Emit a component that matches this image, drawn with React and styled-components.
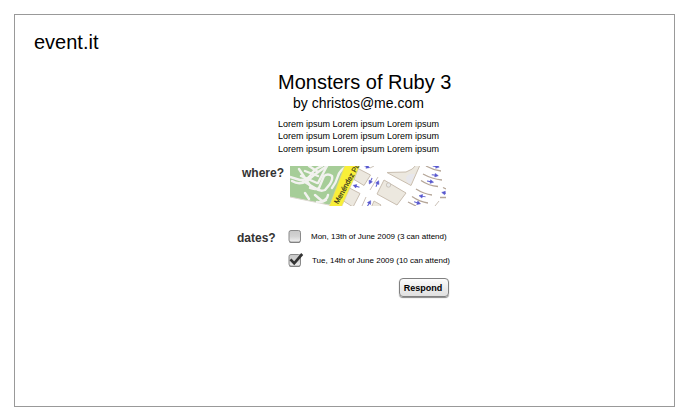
import React from "react";
import styled, { createGlobalStyle } from "styled-components";

const GlobalStyle = createGlobalStyle`
  * { box-sizing: border-box; }
  body { margin: 0; background: #fff; color: #000; font-family: "Liberation Sans", Arial, sans-serif; }
  h1, h2, p { margin: 0; font-weight: 400; }
`;

const Page = styled.main`
  width: 661px;
  height: 393px;
  margin: 14px 0 0 14px;
  border: 1px solid #999;
  padding: 15px 0 0 19px;
  display: flex;
  flex-direction: column;
  align-items: flex-start;
`;

const Brand = styled.h2`
  font-size: 20px;
  line-height: 24px;
`;

const Event = styled.section`
  width: 220px;
  margin: 16px 0 0 203px;
  display: flex;
  flex-direction: column;
`;

const Heading = styled.header`
  margin-left: 41px;
  white-space: nowrap;
`;

const Title = styled.h1`
  font-size: 20px;
  line-height: 24px;
`;

const Host = styled.p`
  font-size: 14px;
  line-height: 18px;
  padding-left: 15px;
`;

const Description = styled.p`
  margin-top: 6px;
  font-size: 9px;
  line-height: 12.4px;
`;

const Field = styled.div`
  display: flex;
  align-items: flex-start;
  margin-top: ${({ $top }) => $top}px;
`;

const Label = styled.div`
  flex: none;
  width: ${({ $width }) => $width}px;
  padding-left: ${({ $indent }) => $indent}px;
  padding-top: ${({ $drop = 0 }) => $drop}px;
  color: #333;
  font-size: 12px;
  font-weight: 700;
  line-height: 14px;
`;

const Map = styled.svg`
  display: block;
  flex: none;
  width: 156px;
  height: 40px;
`;

const Dates = styled.div`
  display: flex;
  flex-direction: column;
  gap: 8px;
`;

const DateOption = styled.label`
  display: flex;
  align-items: center;
  gap: ${({ $gap }) => $gap}px;
  height: 16px;
  font-size: 8px;
  line-height: 10px;
  white-space: nowrap;
`;

const Check = styled.svg`
  display: block;
  width: 18px;
  height: 18px;
  flex: none;
  overflow: visible;
`;

const Respond = styled.button`
  width: 50px;
  height: 19px;
  margin: 9px 0 0 162px;
  padding: 0 2px 0 0;
  border: 1px solid #808080;
  border-radius: 4px;
  background: linear-gradient(#fcfcfc, #ebebeb 55%, #e0e0e0);
  box-shadow: 0 1px 1px #888;
  color: #000;
  font: 700 9px/18px "Liberation Sans", Arial, sans-serif;
`;

const arrows = [
  [66.3, 20.3, 197], [76.5, 0.5, 20], [80.7, 15, 115], [87.3, 17.7, -65],
  [79, 37.5, -60], [146, 0.5, 10], [145, 9.2, 8], [140.3, 15.6, 10],
  [132.3, 30.3, 190], [127.3, 36.8, 18], [155, 27, 190],
];

const StreetMap = () => (
  <Map viewBox="0 0 156 40" aria-label="Map of the venue">
    <rect width="156" height="40" fill="#fff" />
    <path d="M0 0H57L41 37L39 39L0 31Z" fill="#a6cd98" />
    <path d="M0 31L39 39" stroke="#ded8d2" />
    <g fill="none" stroke="#f2f2ef" strokeWidth="2.4" strokeLinecap="round" strokeLinejoin="round">
      <path d="M0 11L10 14Q17 14 20 10Q24 3 32 0" />
      <path d="M2 15Q10 20 18 14Q26 7 37 0" />
      <path d="M9 3L21 21M15 5L28 10M11 10L27 17M19 0L28 6" />
      <path d="M20 22Q25 24 29 22L34 10Q38 7 42 10Q43 13 40 18L35 24Q30 26 25 22L13 15" />
      <path d="M37 0L28 17M15 27L19 33M25 29L32 35Q37 34 38 29M27 36Q32 37 36 34" />
      <path d="M56 1Q50 4 48 10Q46 17 42 22" />
    </g>
    <g fill="#ece8df" stroke="#c9beb0">
      <path d="M68 2.5L80.5 9L74 19.5L64 13.5Z" />
      <path d="M57.5 21L70 27.5L63 41L50.5 33Z" />
      <path d="M94 14L116 27L107 39L87 28Z" />
      <path d="M97 6.5L116 6Q123 4 127-2L130-1L121 19.5Z" />
      <path d="M84 35L91 39L89 42L81 42Z" />
    </g>
    <path d="M116 12Q117 8 122 8L125 8L120.5 18Q116 17 116 12Z" fill="#e7e7ec" />
    <circle cx="98.5" cy="19" r="2.2" fill="#e9e9e7" stroke="#c4bdb3" strokeWidth=".8" />
    <path d="M55-1H70L51.5 41H39Z" fill="#f8ef38" />
    <path d="M55-1L39 41M70-1L51.5 41" stroke="#d8d09a" strokeWidth=".6" />
    <g fill="none" stroke="#b5a698" strokeWidth="1.3">
      <path d="M136 0Q143 4 151 5M133 8Q142 13 152 14M131 14.5Q139 20 148 20.5M126 23Q134 28 142 29M122 30.5Q130 36 138 37M118 36L126 40M153 21.5L156 23M150 31.5H156" />
      <path d="M88 11L80 24M76 31L72 40M80 2L84 0M149 35L145 40" strokeWidth=".7" />
    </g>
    <g fill="#5757ce" stroke="#5757ce" strokeWidth="1">
      {arrows.map(([x, y, angle], index) => (
        <g key={index} transform={`translate(${x} ${y}) rotate(${angle})`}>
          <path d="M-3.3 0H1" />
          <path d="M0-1.8L3.3 0L0 1.8Z" strokeWidth=".5" />
        </g>
      ))}
    </g>
    <text transform="translate(48 38.5) rotate(-61)" fill="#35351d" fontSize="7.3" fontFamily="Liberation Sans, Arial, sans-serif" stroke="#35351d" strokeWidth=".2">
      Menéndez Pa
    </text>
  </Map>
);

const Checkbox = ({ checked = false }) => (
  <Check viewBox="0 0 18 18" role="checkbox" aria-checked={checked}>
    <defs>
      <linearGradient id="boxFill" x1="0" y1="0" x2="0" y2="1">
        <stop offset="0" stopColor="#c8c8c8" />
        <stop offset=".5" stopColor="#d2d2d2" />
        <stop offset="1" stopColor="#f2f2f2" />
      </linearGradient>
    </defs>
    <rect x="2" y="3.4" width="11.5" height="11.6" rx="2" fill="#777" />
    <rect x="2" y="2.5" width="11.5" height="11.6" rx="2" fill="url(#boxFill)" stroke="#8a8a8a" />
    {checked && <path d="M3.5 7.3L7.2 11.3L15.2 2" fill="none" stroke="#333" strokeWidth="2.7" />}
  </Check>
);

export default function App() {
  return (
    <>
      <GlobalStyle />
      <Page>
        <Brand>event.it</Brand>
        <Event>
          <Heading>
            <Title>Monsters of Ruby 3</Title>
            <Host>by christos@me.com</Host>
            <Description>
              Lorem ipsum Lorem ipsum Lorem ipsum<br />
              Lorem ipsum Lorem ipsum Lorem ipsum<br />
              Lorem ipsum Lorem ipsum Lorem ipsum
            </Description>
          </Heading>
          <Field $top={11}>
            <Label $width={53} $indent={5}>where?</Label>
            <StreetMap />
          </Field>
          <Field $top={23}>
            <Label $width={50} $indent={0} $drop={2}>dates?</Label>
            <Dates>
              <DateOption $gap={6}><Checkbox />Mon, 13th of June 2009 (3 can attend)</DateOption>
              <DateOption $gap={7}><Checkbox checked />Tue, 14th of June 2009 (10 can attend)</DateOption>
            </Dates>
          </Field>
          <Respond type="button">Respond</Respond>
        </Event>
      </Page>
    </>
  );
}
